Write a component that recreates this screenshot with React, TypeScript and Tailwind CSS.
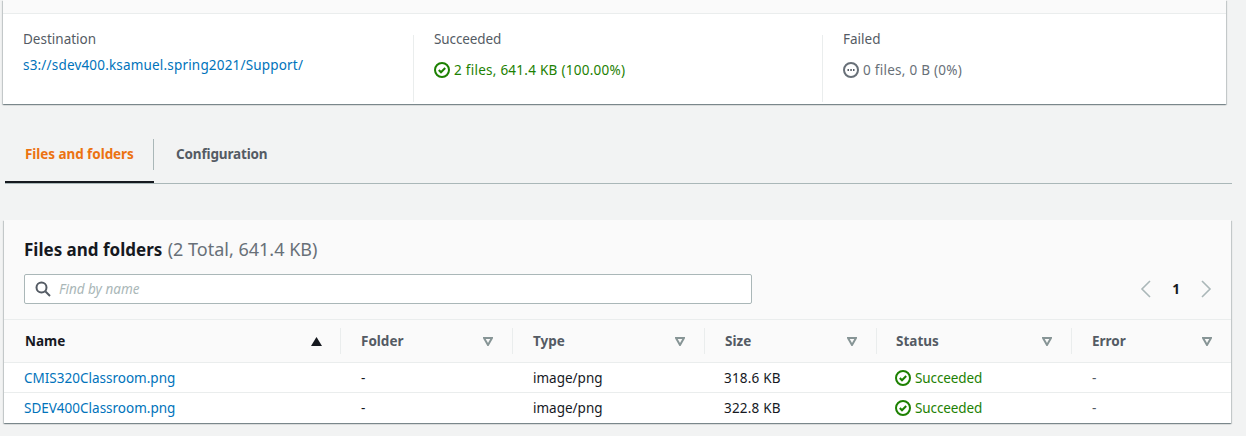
import React from "react";

function CheckIcon() {
  return (
    <svg width="16" height="16" viewBox="0 0 16 16" fill="none" className="shrink-0">
      <circle cx="8" cy="8" r="7" stroke="#1d8102" strokeWidth="2" />
      <path d="M4.8 8l2.2 2.3L11.2 6" stroke="#1d8102" strokeWidth="2" />
    </svg>
  );
}

function PendingIcon() {
  return (
    <svg width="16" height="16" viewBox="0 0 16 16" fill="none" className="shrink-0">
      <circle cx="8" cy="8" r="7" stroke="#687078" strokeWidth="2" />
      <path d="M4.5 8h1.5M7.3 8h1.5M10 8h1.5" stroke="#545b64" strokeWidth="2" />
    </svg>
  );
}

function FilterCaret() {
  return (
    <svg width="10" height="9" viewBox="0 0 10 9" fill="none">
      <path d="M1 1h8L5 8z" stroke="#879596" strokeWidth="2" strokeLinejoin="miter" />
    </svg>
  );
}

function SortCaret() {
  return (
    <svg width="11" height="9" viewBox="0 0 11 9">
      <path d="M5.5 0l5.5 9H0z" fill="#16191f" />
    </svg>
  );
}

const columns = ["Name", "Folder", "Type", "Size", "Status", "Error"];
const rows = [
  { name: "CMIS320Classroom.png", size: "318.6 KB" },
  { name: "SDEV400Classroom.png", size: "322.8 KB" },
];
const grid = "grid grid-cols-[336px_172px_192px_172px_195px_1fr]";

export default function App() {
  return (
    <div className="w-[1246px] h-[436px] overflow-hidden bg-[#f2f3f3] text-[13.5px] leading-[20px] text-[#16191f] font-['Noto_Sans','Liberation_Sans',sans-serif]">
      <div className="ml-[3px] w-[1223px] shadow-[0_1px_1px_0_rgba(0,28,36,0.3),1px_1px_1px_0_rgba(0,28,36,0.15),-1px_1px_1px_0_rgba(0,28,36,0.15)]">
        <div className="h-[14px] bg-[#fafafa] border-b border-[#eaeded]"></div>
        <div className="h-[90px] bg-white pt-[21px] grid grid-cols-[410px_409px_1fr] text-[#545b64]">
          <div className="h-[67px] pl-[20px]">
            <div className="h-[20px] mt-[-6px] mb-[6px]">Destination</div>
            <a className="text-[#0073bb] tracking-[0.18px]">s3://sdev400.ksamuel.spring2021/Support/</a>
          </div>
          <div className="h-[67px] border-l border-[#eaeded] pl-[20px]">
            <div className="mt-[-6px] mb-[11px] tracking-[-0.1px]">Succeeded</div>
            <div className="flex items-center gap-[4px] text-[#1d8102] tracking-[0.26px]"><CheckIcon />2 files, 641.4 KB (100.00%)</div>
          </div>
          <div className="h-[67px] border-l border-[#eaeded] pl-[20px]">
            <div className="mt-[-6px] mb-[11px]">Failed</div>
            <div className="flex items-center gap-[4px] text-[#687078] tracking-[0.26px]"><PendingIcon />0 files, 0 B (0%)</div>
          </div>
        </div>
      </div>

      <div className="mt-[35px] ml-[5px] w-[1227px] h-[45px] border-b border-[#aab7b8] flex">
        <div className="relative w-[149px] h-[44px] border-b-2 border-[#16191f] pl-[20px] pt-[5px] font-bold text-[#ec7211] tracking-[-0.06px]">
          Files and folders
          <span className="absolute right-0 top-0 h-[31px] border-r border-[#aab7b8]"></span>
        </div>
        <div className="pl-[22px] pt-[5px] font-bold text-[#545b64] tracking-[-0.15px]">Configuration</div>
      </div>

      <div className="mt-[36px] ml-[4px] w-[1227px] shadow-[0_1px_1px_0_rgba(0,28,36,0.3),1px_1px_1px_0_rgba(0,28,36,0.15),-1px_1px_1px_0_rgba(0,28,36,0.15)]">
        <div className="h-[100px] bg-[#fafafa] border-b border-[#eaeded] px-[20px] pt-[17px]">
          <div className="h-[24px] text-[17px] leading-[24px]">
            <span className="font-bold">Files and folders</span>{" "}
            <span className="ml-[1px] text-[18px] text-[#687078]">(2 Total, 641.4 KB)</span>
          </div>
          <div className="mt-[13px] flex items-center justify-between">
            <div className="w-[728px] h-[30px] bg-white border border-[#aab7b8] rounded-[2px] flex items-center pl-[10px] gap-[8px]">
              <svg width="16" height="16" viewBox="0 0 16 16" fill="none" className="shrink-0">
                <circle cx="6.5" cy="6.5" r="5" stroke="#545b64" strokeWidth="2" />
                <path d="M10.5 10.5L15 15" stroke="#545b64" strokeWidth="2" />
              </svg>
              <span className="italic text-[#aab7b8]">Find by name</span>
            </div>
            <div className="flex items-center mr-[-1px]">
              <svg width="12" height="18" viewBox="0 0 12 18" fill="none"><path d="M10 1L2 9l8 8" stroke="#aab7b8" strokeWidth="1.6" /></svg>
              <span className="w-[48px] text-center font-bold">1</span>
              <svg width="12" height="18" viewBox="0 0 12 18" fill="none"><path d="M2 1l8 8-8 8" stroke="#aab7b8" strokeWidth="1.6" /></svg>
            </div>
          </div>
        </div>

        <div className={`${grid} h-[43px] bg-[#fafafa] border-b border-[#eaeded] items-center`}>
          {columns.map((c, i) => (
            <div key={c} className={`h-[26px] flex items-center justify-between ${i === 0 ? "pl-[21px] pr-[18px] text-[#16191f]" : `border-l border-[#eaeded] ${i === 4 ? "pl-[19px]" : "pl-[20px]"} pr-[19px] text-[#545b64]`} font-bold`}>
              {c}
              {i === 0 ? <SortCaret /> : <FilterCaret />}
            </div>
          ))}
        </div>

        {rows.map((r, idx) => (
          <div key={r.name} className={`${grid} h-[30px] bg-white items-center ${idx === 0 ? "border-b border-[#eaeded]" : ""}`}>
            <a className="pl-[20px] text-[#0073bb]">{r.name}</a>
            <div className="pl-[21px]">-</div>
            <div className="pl-[21px]">image/png</div>
            <div className="pl-[20px] tracking-[0.2px]">{r.size}</div>
            <div className="pl-[19px] flex items-center gap-[4px] text-[#1d8102] tracking-[-0.1px]"><CheckIcon />Succeeded</div>
            <div className="pl-[21px] text-[#545b64]">-</div>
          </div>
        ))}
      </div>
    </div>
  );
}
